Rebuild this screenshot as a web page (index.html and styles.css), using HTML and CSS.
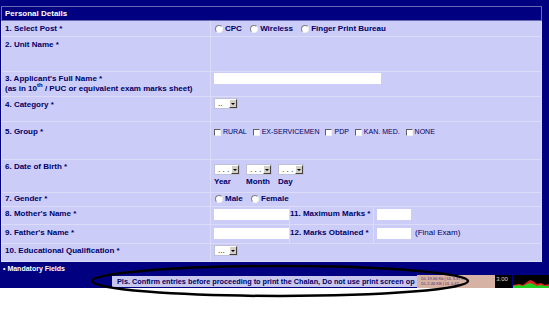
FILE: index.html
```html
<!DOCTYPE html>
<html lang="en">
<head>
    <meta charset="UTF-8">
    <title>Personal Details</title>
    <link rel="stylesheet" href="styles.css">
</head>
<body>

    <div class="frame">
        <table class="form-table">
            <colgroup>
                <col class="c-label">
                <col class="c-a">
                <col class="c-b">
                <col>
            </colgroup>
            <tr class="head">
                <td colspan="4">Personal Details</td>
            </tr>
            <tr class="r1">
                <td>1. Select Post *</td>
                <td colspan="3">
                    <span class="opt"><span class="radio"></span>CPC</span>
                    <span class="opt"><span class="radio"></span>Wireless</span>
                    <span class="opt"><span class="radio"></span>Finger Print Bureau</span>
                </td>
            </tr>
            <tr class="r2">
                <td>2. Unit Name *</td>
                <td colspan="3"></td>
            </tr>
            <tr class="r3">
                <td>3. Applicant's Full Name *<br>(as in 10<sup>th</sup> / PUC or equivalent exam marks sheet)</td>
                <td colspan="3"><span class="input wide"></span></td>
            </tr>
            <tr class="r4">
                <td>4. Category *</td>
                <td colspan="3"><span class="sel">..<span class="arr"></span></span></td>
            </tr>
            <tr class="r5">
                <td>5. Group *</td>
                <td colspan="3" class="checks">
                    <span class="chk"><span class="box"></span>RURAL</span>
                    <span class="chk"><span class="box"></span>EX-SERVICEMEN</span>
                    <span class="chk"><span class="box"></span>PDP</span>
                    <span class="chk"><span class="box"></span>KAN. MED.</span>
                    <span class="chk"><span class="box"></span>NONE</span>
                </td>
            </tr>
            <tr class="r6">
                <td>6. Date of Birth *</td>
                <td colspan="3">
                    <div class="dob">
                        <div class="dob-part"><span class="sel">. . .<span class="arr"></span></span>Year</div>
                        <div class="dob-part"><span class="sel">. . .<span class="arr"></span></span>Month</div>
                        <div class="dob-part"><span class="sel">. . .<span class="arr"></span></span>Day</div>
                    </div>
                </td>
            </tr>
            <tr class="r7">
                <td>7. Gender *</td>
                <td colspan="3">
                    <span class="opt"><span class="radio"></span>Male</span>
                    <span class="opt"><span class="radio"></span>Female</span>
                </td>
            </tr>
            <tr class="r8">
                <td>8. Mother's Name *</td>
                <td class="in-cell"><span class="input fill"></span></td>
                <td class="sub-label">11. Maximum Marks *</td>
                <td><span class="input small"></span></td>
            </tr>
            <tr class="r9">
                <td>9. Father's Name *</td>
                <td class="in-cell"><span class="input fill"></span></td>
                <td class="sub-label">12. Marks Obtained *</td>
                <td><span class="input small"></span><span class="note">(Final Exam)</span></td>
            </tr>
            <tr class="r10">
                <td>10. Educational Qualification *</td>
                <td colspan="3"><span class="sel">...<span class="arr"></span></span></td>
            </tr>
        </table>

        <div class="footer">
            <div class="mandatory">&bull; Mandatory Fields</div>
            <div class="status">
                <div class="message">Pls. Confirm entries before proceeding to print the Chalan, Do not use print screen op</div>
                <div class="meter"><div>DL 19.66 Kb | UL 3.37 Kb</div><div>DL 2.46 KB | UL 0.42</div></div>
                <div class="speed">3.00</div>
                <svg class="graph" width="36" height="13" viewBox="0 0 36 13">
                    <rect width="36" height="13" fill="#000"/>
                    <path d="M0 13 L0 10 L6 9 L10 10 L14 7 L17 5 L20 6 L24 9 L28 8 L32 10 L36 9 L36 13 Z" fill="#e02020"/>
                    <path d="M0 13 L0 11 L6 10 L10 11 L14 9 L17 8 L20 9 L24 11 L28 10 L32 11 L36 11 L36 13 Z" fill="#20d020"/>
                </svg>
            </div>
        </div>
    </div>

    <svg class="circle-mark" width="549" height="312" viewBox="0 0 549 312">
        <ellipse cx="280" cy="281" rx="188" ry="15" fill="none" stroke="#000" stroke-width="2.5"/>
    </svg>

</body>
</html>
```

FILE: styles.css
```css
body {
    margin: 0;
    background: white;
    font-family: "Liberation Sans", Arial, sans-serif;
    position: relative;
    width: 549px;
    height: 312px;
    overflow: hidden;
}
.frame {
    background: #000080;
    padding: 6px 7px 0 1px;
}
.form-table {
    width: 541px;
    border-collapse: collapse;
    table-layout: fixed;
    background: #ccccf8;
    color: #000066;
    font-size: 8px;
    font-weight: bold;
}
.c-label {
    width: 209px;
}
.c-a {
    width: 79px;
}
.c-b {
    width: 84px;
}
.form-table td {
    border: 1px solid #dcdcf8;
    vertical-align: top;
    padding: 3px 2px 0 3px;
    line-height: 10px;
    white-space: nowrap;
    overflow: hidden;
}
.form-table tr.head td {
    background: #000080;
    color: white;
    border: 1px solid #6a6ab4;
    padding: 2px 3px 0;
}
.head { height: 14px; }
.r1 { height: 15px; }
.r2 { height: 35px; }
.r3 { height: 25px; }
.r4 { height: 25px; }
.r5 { height: 38px; }
.r6 { height: 33px; }
.r7 { height: 14px; }
.r8 { height: 18px; }
.r9 { height: 19px; }
.r10 { height: 18px; }
.r3 td { padding-top: 2px; }
.r5 td { padding-top: 5px; }
.r6 td { padding-top: 2px; }
.r7 td { padding-top: 1px; }
.r8 td { padding-top: 2px; }
.r9 td { padding-top: 3px; }
.r10 td { padding-top: 2px; }
.r3 td:last-child,
.r4 td:last-child,
.r10 td:last-child {
    padding-top: 1px;
}
sup {
    font-size: 6px;
    line-height: 0;
}
.opt {
    display: inline-flex;
    align-items: center;
    margin-right: 5px;
    margin-left: 1px;
}
.radio {
    display: inline-block;
    width: 6px;
    height: 6px;
    border-radius: 50%;
    background: white;
    border: 1px solid;
    border-color: #808080 #f0f0f0 #f0f0f0 #808080;
    margin-right: 2px;
}
.checks {
    font-weight: normal;
    font-size: 7px;
}
.chk {
    display: inline-flex;
    align-items: center;
    margin-right: 4px;
}
.box {
    display: inline-block;
    width: 5px;
    height: 5px;
    background: white;
    border: 1px solid;
    border-color: #606060 #f0f0f0 #f0f0f0 #606060;
    margin-right: 2px;
}
.input {
    display: inline-block;
    height: 11px;
    background: white;
    vertical-align: top;
}
.input.wide {
    width: 167px;
}
.input.fill {
    width: 77px;
}
.input.small {
    width: 34px;
}
.note {
    font-weight: normal;
    margin-left: 4px;
}
.sub-label {
    text-align: right;
}
.form-table td.sub-label {
    padding-right: 6px;
    padding-left: 0;
}
.sel {
    display: inline-flex;
    align-items: center;
    justify-content: space-between;
    width: 24px;
    height: 11px;
    background: white;
    padding-left: 3px;
    box-sizing: border-box;
    font-weight: normal;
    font-size: 8px;
    color: #000;
    border: 1px solid #c0c0d8;
}
.arr {
    width: 8px;
    height: 9px;
    background: #d4d0c8;
    border: 1px solid;
    border-color: #fff #404040 #404040 #fff;
    box-sizing: border-box;
    position: relative;
}
.arr::after {
    content: "";
    position: absolute;
    left: 1px;
    top: 3px;
    border-left: 2px solid transparent;
    border-right: 2px solid transparent;
    border-top: 2px solid #000;
}
.dob {
    display: flex;
    gap: 6px;
    padding-top: 2px;
}
.dob-part {
    display: flex;
    flex-direction: column;
    gap: 2px;
}
.dob .sel {
    width: 26px;
}
.footer {
    height: 26px;
    color: white;
    font-size: 7px;
    font-weight: bold;
}
.mandatory {
    padding: 3px 0 0 2px;
    height: 8px;
    line-height: 8px;
}
.status {
    display: flex;
    margin: 2px -7px 0 111px;
    height: 13px;
}
.message {
    width: 306px;
    background: #c8c8ee;
    color: #000066;
    white-space: nowrap;
    overflow: hidden;
    padding-left: 5px;
    box-sizing: border-box;
    line-height: 11px;
    height: 11px;
    margin-top: 1px;
    font-size: 7.3px;
}
.meter {
    width: 78px;
    background: #d6b2a4;
    color: #4a2a6a;
    font-size: 4px;
    font-weight: normal;
    line-height: 5px;
    padding: 1px 0 0 4px;
    box-sizing: border-box;
    overflow: hidden;
}
.speed {
    width: 17px;
    background: #000;
    color: #ddd;
    font-size: 6px;
    font-weight: normal;
    padding: 1px 0 0 1px;
    box-sizing: border-box;
}
.graph {
    display: block;
    margin-left: 1px;
}
.circle-mark {
    position: absolute;
    left: 0;
    top: 0;
    pointer-events: none;
}
```
